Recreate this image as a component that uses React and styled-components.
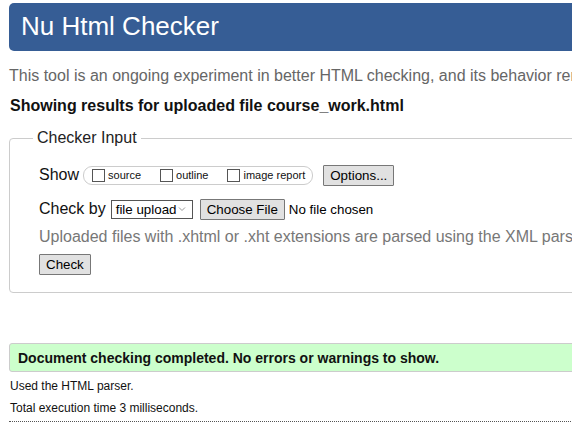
import styled, { createGlobalStyle } from "styled-components";

const GlobalStyle = createGlobalStyle`
  html, body {
    margin: 0;
    padding: 0;
    background: #fff;
    overflow: hidden;
  }
  body {
    font-family: "Liberation Sans", Arial, sans-serif;
    color: #000;
  }
`;

const Page = styled.div`
  width: 1000px;
  padding: 3px 0 0 9px;
`;

const Title = styled.h1`
  margin: 0;
  height: 48px;
  padding-left: 12px;
  background: #365d95;
  color: #fff;
  font-size: 26px;
  font-weight: normal;
  line-height: 46px;
  border-radius: 5px;
`;

const Intro = styled.p`
  margin: 16px 0 0;
  font-size: 16px;
  line-height: 18px;
  color: #666;
  white-space: nowrap;
`;

const Heading = styled.h2`
  margin: 12px 0 0 1px;
  font-size: 16px;
  line-height: 18px;
  font-weight: bold;
  color: #111;
`;

const Fieldset = styled.fieldset`
  margin: 14px 0 0;
  padding: 0 29px 17px;
  border: 1px solid #ccc;
  border-radius: 4px;
  min-width: 0;
`;

const Legend = styled.legend`
  margin-left: -6px;
  padding: 0 4px;
  font-size: 16px;
  line-height: 18px;
  color: #222;
`;

const Rows = styled.div`
  display: flex;
  flex-direction: column;
  padding-top: 17px;
`;

const Row = styled.div`
  display: flex;
  align-items: center;
  height: ${(p) => p.$h || 22}px;
  margin-top: ${(p) => p.$gap || 0}px;
  font-size: 16px;
  white-space: nowrap;
`;

const Label = styled.span`
  font-size: 16px;
  color: #111;
`;

const Pill = styled.span`
  display: inline-flex;
  align-items: center;
  height: 17px;
  margin-left: 4px;
  padding: 0 7px 0 8px;
  border: 1px solid #ccc;
  border-radius: 9px;
`;

const Option = styled.label`
  display: inline-flex;
  align-items: center;
  gap: 3px;
  margin-right: ${(p) => (p.$last ? 0 : 19)}px;
  font-size: 11px;
  color: #111;
`;

const Box = styled.input`
  appearance: none;
  margin: 0;
  width: 13px;
  height: 13px;
  border: 1px solid #555;
  background: #fff;
`;

const Button = styled.button`
  height: 21px;
  margin-left: ${(p) => p.$ml || 0}px;
  padding: 0 6px;
  font-family: "Liberation Sans", Arial, sans-serif;
  font-size: 13.33px;
  color: #000;
  background: #e1e1e1;
  border: 1px solid #777;
  border-radius: 1px;
`;

const Select = styled.span`
  display: inline-flex;
  align-items: center;
  justify-content: space-between;
  width: 82px;
  height: 19px;
  box-sizing: border-box;
  margin-left: 5px;
  padding: 0 6px 0 4px;
  border: 1px solid #555;
  background: #fff;
  font-size: 13.33px;
  color: #000;
`;

const FileState = styled.span`
  margin-left: 4px;
  font-size: 13.33px;
  color: #000;
`;

const Note = styled.span`
  font-size: 16px;
  color: #777;
`;

const Success = styled.div`
  margin-top: 50px;
  height: 27px;
  padding-left: 8px;
  display: flex;
  align-items: center;
  background: #ccffcc;
  border: 1px solid #ccc;
  border-radius: 3px;
  font-size: 14px;
  font-weight: bold;
  color: #111;
`;

const Detail = styled.p`
  margin: ${(p) => p.$mt}px 0 0 1px;
  font-size: 12px;
  line-height: 14px;
  color: #111;
`;

const Rule = styled.hr`
  margin: 6px 0 0;
  border: 0;
  border-top: 1px dotted #555;
`;

const Chevron = () => (
  <svg width="8" height="6" viewBox="0 0 8 6" fill="none">
    <path d="M1 1.5 L4 4.5 L7 1.5" stroke="#999" strokeWidth="1" />
  </svg>
);

export default function App() {
  return (
    <Page>
      <GlobalStyle />
      <Title>Nu Html Checker</Title>
      <Intro>
        This tool is an ongoing experiment in better HTML checking, and its
        behavior remains subject to change
      </Intro>
      <Heading>Showing results for uploaded file course_work.html</Heading>

      <Fieldset>
        <Legend>Checker Input</Legend>
        <Rows>
          <Row>
            <Label>Show</Label>
            <Pill>
              <Option>
                <Box type="checkbox" />
                source
              </Option>
              <Option>
                <Box type="checkbox" />
                outline
              </Option>
              <Option $last>
                <Box type="checkbox" />
                image report
              </Option>
            </Pill>
            <Button $ml={10}>Options...</Button>
          </Row>
          <Row $gap={12}>
            <Label>Check by</Label>
            <Select>
              file upload
              <Chevron />
            </Select>
            <Button $ml={7}>Choose File</Button>
            <FileState>No file chosen</FileState>
          </Row>
          <Row $gap={8} $h={18}>
            <Note>
              Uploaded files with .xhtml or .xht extensions are parsed using
              the XML parser.
            </Note>
          </Row>
          <Row $gap={8} $h={21}>
            <Button>Check</Button>
          </Row>
        </Rows>
      </Fieldset>

      <Success>Document checking completed. No errors or warnings to show.</Success>
      <Detail $mt={7}>Used the HTML parser.</Detail>
      <Detail $mt={8}>Total execution time 3 milliseconds.</Detail>
      <Rule />
    </Page>
  );
}
